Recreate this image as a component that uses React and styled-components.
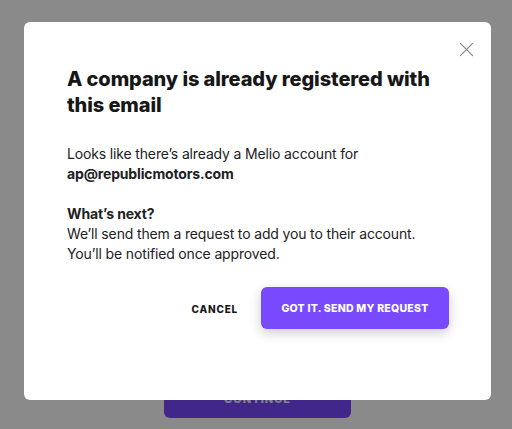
import React from 'react';
import styled, { createGlobalStyle } from 'styled-components';

const GlobalStyle = createGlobalStyle`
  html, body {
    margin: 0;
    padding: 0;
  }
  body {
    font-family: Inter, "Noto Sans", sans-serif;
    background: #ffffff;
  }
`;

const Page = styled.div`
  position: relative;
  width: 512px;
  height: 429px;
  overflow: hidden;
  display: flex;
  flex-direction: column;
  align-items: center;
  justify-content: flex-end;
  padding-bottom: 11px;
  box-sizing: border-box;
`;

const ContinueButton = styled.button`
  width: 187px;
  height: 44px;
  margin-left: 3px;
  border: 0;
  border-radius: 6px;
  background: #7849ff;
  color: #f2f2f6;
  font-family: inherit;
  font-size: 11px;
  line-height: 13px;
  font-weight: 800;
  letter-spacing: 1px;
  text-transform: uppercase;
  display: flex;
  align-items: flex-start;
  justify-content: center;
  padding-top: 19px;
  box-sizing: border-box;
`;

const Overlay = styled.div`
  position: absolute;
  inset: 0;
  background: rgba(0, 0, 0, 0.46);
  display: flex;
  justify-content: center;
  align-items: flex-start;
  padding: 22px 21px 0 24px;
  box-sizing: border-box;
`;

const Modal = styled.div`
  position: relative;
  width: 467px;
  height: 378px;
  box-sizing: border-box;
  padding: 44px 42px 0 43px;
  background: #ffffff;
  border-radius: 6px;
  display: flex;
  flex-direction: column;
`;

const CloseButton = styled.button`
  position: absolute;
  top: 19px;
  right: 17px;
  width: 16px;
  height: 16px;
  padding: 0;
  border: 0;
  background: none;
  color: #8c8c8c;
  display: flex;
  align-items: center;
  justify-content: center;
  svg {
    width: 15px;
    height: 15px;
  }
`;

const Title = styled.h2`
  margin: 0 0 26px;
  font-size: 20px;
  line-height: 26px;
  font-weight: 800;
  color: #171717;
  letter-spacing: -0.1px;
`;

const Body = styled.div`
  font-size: 14px;
  line-height: 20px;
  letter-spacing: -0.15px;
  color: #212124;
  p {
    margin: 0 0 20px;
  }
  p:last-child {
    margin: 0;
  }
  strong {
    font-weight: 700;
  }
`;

const Actions = styled.div`
  margin-top: 23px;
  display: flex;
  justify-content: flex-end;
  align-items: center;
  gap: 14px;
`;

const TextButton = styled.button`
  border: 0;
  background: none;
  padding: 2px 9px 0;
  font-family: inherit;
  font-size: 10px;
  font-weight: 800;
  letter-spacing: 0.8px;
  color: #171717;
  text-transform: uppercase;
`;

const PrimaryButton = styled.button`
  width: 188px;
  height: 42px;
  border: 0;
  border-radius: 6px;
  padding-top: 2px;
  background: #7849ff;
  box-shadow: 0 4px 12px rgba(0, 0, 0, 0.2);
  font-family: inherit;
  font-size: 10.5px;
  font-weight: 800;
  letter-spacing: 0.25px;
  color: #ffffff;
  text-transform: uppercase;
`;

const CloseIcon = () => (
  <svg viewBox="0 0 16 16" fill="none" stroke="currentColor" strokeWidth="1.4" strokeLinecap="round">
    <path d="M1.5 1.5l13 13M14.5 1.5l-13 13" />
  </svg>
);

export default function App() {
  return (
    <>
      <GlobalStyle />
      <Page>
        <ContinueButton>Continue</ContinueButton>
        <Overlay>
          <Modal>
            <CloseButton aria-label="Close">
              <CloseIcon />
            </CloseButton>
            <Title>A company is already registered with this email</Title>
            <Body>
              <p>
                Looks like there’s already a Melio account for
                <br />
                <strong>ap@republicmotors.com</strong>
              </p>
              <p>
                <strong>What’s next?</strong>
                <br />
                We’ll send them a request to add you to their account.
                <br />
                You’ll be notified once approved.
              </p>
            </Body>
            <Actions>
              <TextButton>Cancel</TextButton>
              <PrimaryButton>Got it. Send my request</PrimaryButton>
            </Actions>
          </Modal>
        </Overlay>
      </Page>
    </>
  );
}
